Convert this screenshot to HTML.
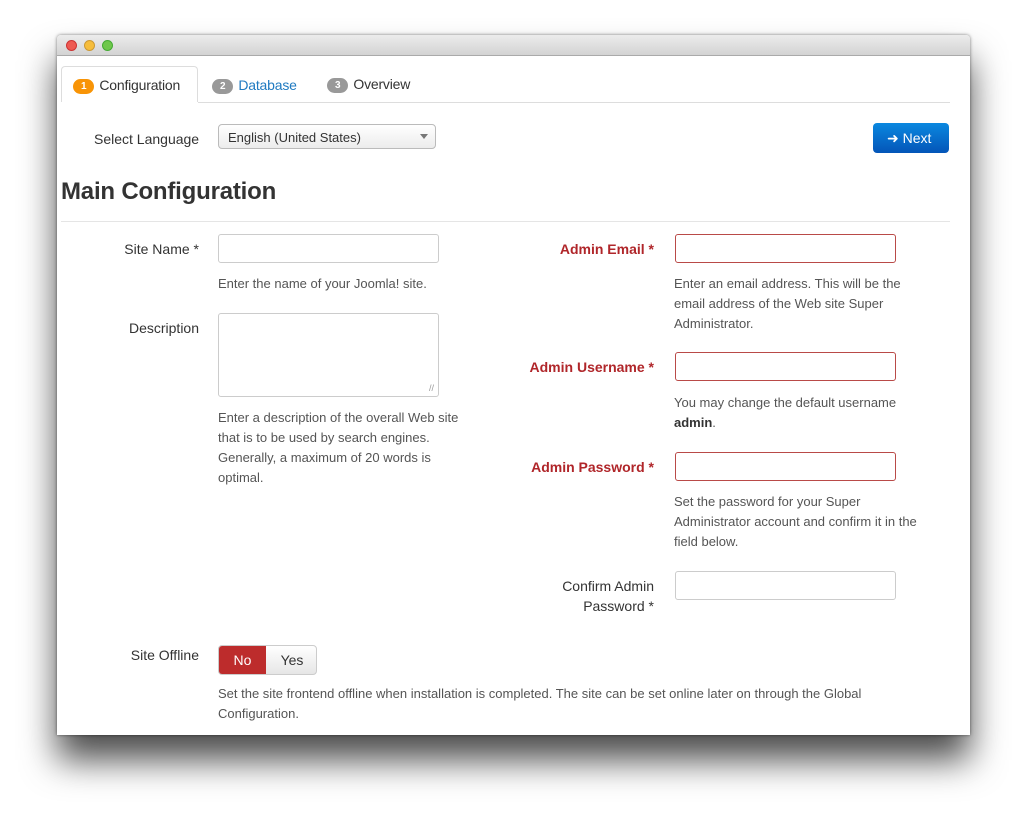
<!DOCTYPE html>
<html><head><meta charset="utf-8"><style>
*{box-sizing:border-box;margin:0;padding:0}
body{width:1027px;height:814px;background:#fff;font-family:"Liberation Sans",sans-serif;font-size:13px;color:#333;position:relative;overflow:hidden}
.win{position:absolute;left:57px;top:35px;width:913px;height:700px;background:#fff;box-shadow:0 25px 35px rgba(0,0,0,.7),0 0 3px rgba(0,0,0,.5);border-radius:4px 4px 0 0;overflow:hidden}
.tb{height:21px;background:linear-gradient(#ececec,#d3d3d3);border-bottom:1px solid #aaa}
.dot{position:absolute;top:5px;width:11px;height:11px;border-radius:50%}
.a{position:absolute;white-space:nowrap}
.inp{position:absolute;height:29px;border:1px solid #ccc;border-radius:3px;background:#fff}
.red{border-color:#b94a48}
.lbl{position:absolute;text-align:right;width:200px}
.rl{color:#b0262a;font-weight:bold}
.help{position:absolute;line-height:20px;color:#555}
.badge{display:inline-block;background:#999;color:#fff;border-radius:9px;font-size:10px;font-weight:bold;padding:2px 7px;margin-right:5px;vertical-align:1px}
</style></head><body>
<div class="win">
<div class="tb"></div>
<div class="dot" style="left:9px;background:#ee5a52;border:1px solid #c33"></div>
<div class="dot" style="left:27px;background:#f6bd3b;border:1px solid #c93"></div>
<div class="dot" style="left:45px;background:#6fc74b;border:1px solid #4a3"></div>
<div class="a" style="left:4px;top:31px;width:137px;height:38px;border:1px solid #ddd;border-bottom:none;border-radius:4px 4px 0 0;background:#fff"></div>
<div class="a" style="left:4px;top:67px;width:889px;height:1px;background:#ddd"></div>
<div class="a" style="left:4px;top:67px;width:137px;height:2px;background:#fff"></div>
<div class="a" style="left:16px;top:42px;font-size:14px;letter-spacing:-0.2px"><span class="badge" style="background:#f89406;padding:2px 8px">1</span>Configuration</div>
<div class="a" style="left:155px;top:42px;font-size:14px;color:#1f7ac1;letter-spacing:-0.2px"><span class="badge" style="padding:2px 8px">2</span>Database</div>
<div class="a" style="left:270px;top:41px;font-size:14px;letter-spacing:-0.2px"><span class="badge" style="padding:2px 8px">3</span>Overview</div>
<div class="a" style="left:37px;top:96px;font-size:14px">Select Language</div>
<div class="a" style="left:161px;top:89px;width:218px;height:25px;border:1px solid #bbb;border-radius:4px;background:linear-gradient(#fff,#ececec);padding:5px 9px;font-size:13px">English (United States)<span style="position:absolute;right:7px;top:9px;border:4px solid transparent;border-top:5px solid #777;border-bottom:none"></span></div>
<div class="a" style="left:816px;top:88px;width:76px;height:30px;border-radius:4px;background:linear-gradient(#0a88e0,#0455b8);color:#fff;font-size:14px;padding:7px 0 0 14px">➜ Next</div>
<div class="a" style="left:4px;top:143px;font-size:24px;font-weight:bold;color:#333;letter-spacing:-0.2px">Main Configuration</div>
<div class="a" style="left:4px;top:186px;width:889px;height:1px;background:#e5e5e5"></div>
<div class="lbl" style="left:-58px;top:206px;font-size:14px">Site Name *</div>
<div class="inp" style="left:161px;top:199px;width:221px"></div>
<div class="help" style="left:161px;top:239px">Enter the name of your Joomla! site.</div>
<div class="lbl" style="left:-58px;top:285px;font-size:14px">Description</div>
<div class="inp" style="left:161px;top:278px;width:221px;height:84px;border-radius:3px"><span style="position:absolute;right:4px;bottom:3px;color:#999;font-size:9px">//</span></div>
<div class="help" style="left:161px;top:373px">Enter a description of the overall Web site<br>that is to be used by search engines.<br>Generally, a maximum of 20 words is<br>optimal.</div>
<div class="lbl rl" style="left:397px;top:206px;font-size:14px">Admin Email *</div>
<div class="inp red" style="left:618px;top:199px;width:221px"></div>
<div class="help" style="left:617px;top:239px">Enter an email address. This will be the<br>email address of the Web site Super<br>Administrator.</div>
<div class="lbl rl" style="left:397px;top:324px;font-size:14px">Admin Username *</div>
<div class="inp red" style="left:618px;top:317px;width:221px"></div>
<div class="help" style="left:617px;top:358px">You may change the default username<br><b style="color:#333">admin</b>.</div>
<div class="lbl rl" style="left:397px;top:424px;font-size:14px">Admin Password *</div>
<div class="inp red" style="left:618px;top:417px;width:221px"></div>
<div class="help" style="left:617px;top:457px">Set the password for your Super<br>Administrator account and confirm it in the<br>field below.</div>
<div class="lbl" style="left:397px;top:541px;font-size:14px;line-height:20px">Confirm Admin<br>Password *</div>
<div class="inp" style="left:618px;top:536px;width:221px"></div>
<div class="lbl" style="left:-58px;top:612px;font-size:14px">Site Offline</div>
<div class="a" style="left:161px;top:610px;width:99px;height:30px;border:1px solid #ccc;border-radius:4px;background:linear-gradient(#fff,#e6e6e6);overflow:hidden">
<div style="position:absolute;left:0;top:0;width:47px;height:30px;background:#bd2c2c;color:#fff;font-size:14px;text-align:center;line-height:28px">No</div>
<div style="position:absolute;left:47px;top:0;width:52px;text-align:center;line-height:28px;font-size:14px">Yes</div></div>
<div class="help" style="left:161px;top:649px">Set the site frontend offline when installation is completed. The site can be set online later on through the Global<br>Configuration.</div>
</div>
</body></html>
